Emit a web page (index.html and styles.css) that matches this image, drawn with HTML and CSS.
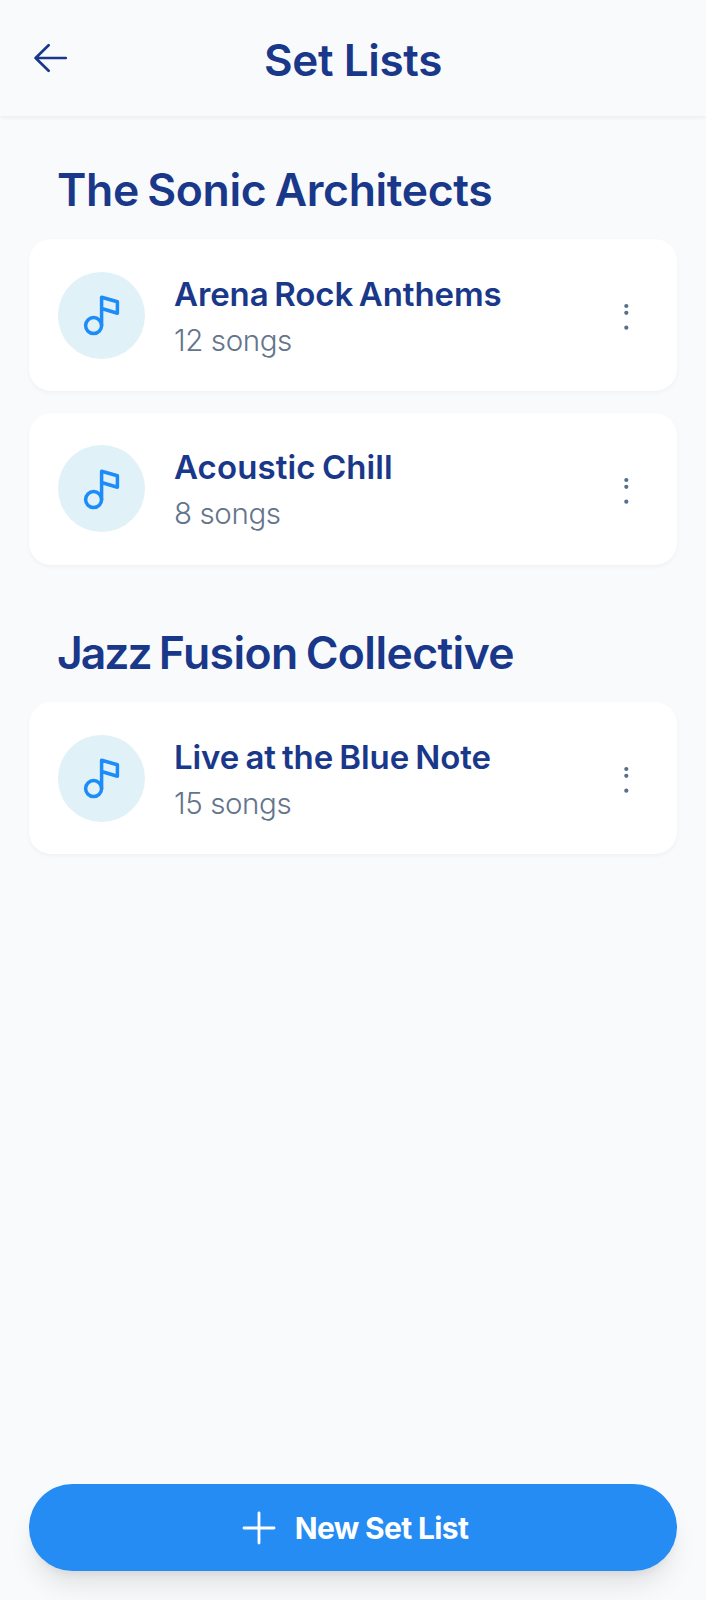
FILE: index.html
```html
<!DOCTYPE html>
<html lang="en">
<head>
<meta charset="utf-8">
<title>Set Lists</title>
<link rel="stylesheet" href="styles.css">
</head>
<body>
<svg class="sprite" aria-hidden="true">
  <symbol id="note" viewBox="0 0 44 44">
    <circle cx="13.6" cy="32.6" r="8"/>
    <path d="M21.6 32.6V4.3L37.4 8.8v11.4L21.6 15.5"/>
  </symbol>
  <symbol id="dots" viewBox="0 0 44 44">
    <circle cx="22.3" cy="13" r="2.1"/><circle cx="22.3" cy="19.8" r="2.1"/><circle cx="22.3" cy="34.7" r="2.1"/>
  </symbol>
</svg>
<div class="app">
  <header class="header">
    <button class="back" aria-label="Back"><svg class="arrow" viewBox="0 0 34 30"><path d="M31.8 15H1.6M14.6 2.3 1.6 15l13 12.7"/></svg></button>
    <h1 class="title">Set Lists</h1>
  </header>
  <main class="content">
    <section class="group">
      <h2 class="band sonic">The Sonic Architects</h2>
      <div class="cards">
        <article class="card">
          <div class="badge"><svg class="note"><use href="#note"/></svg></div>
          <div class="info"><h3 class="name arena">Arena Rock Anthems</h3><p class="count">12 songs</p></div>
          <button class="more" aria-label="More"><svg class="dots"><use href="#dots"/></svg></button>
        </article>
        <article class="card">
          <div class="badge"><svg class="note"><use href="#note"/></svg></div>
          <div class="info"><h3 class="name acoustic">Acoustic Chill</h3><p class="count">8 songs</p></div>
          <button class="more" aria-label="More"><svg class="dots"><use href="#dots"/></svg></button>
        </article>
      </div>
    </section>
    <section class="group">
      <h2 class="band jazz"><span class="tight">Jazz</span> Fusion Collective</h2>
      <div class="cards">
        <article class="card">
          <div class="badge"><svg class="note"><use href="#note"/></svg></div>
          <div class="info"><h3 class="name live">Live at the Blue Note</h3><p class="count">15 songs</p></div>
          <button class="more" aria-label="More"><svg class="dots"><use href="#dots"/></svg></button>
        </article>
      </div>
    </section>
  </main>
  <footer class="footer">
    <button class="create"><svg class="plus" viewBox="0 0 34 34"><path d="M17 2v30M2 17h30"/></svg><span class="label">New Set List</span></button>
  </footer>
</div>
</body>
</html>
```
FILE: styles.css
```css
* { box-sizing: border-box; }
body, h1, h2, h3, p { margin: 0; }
body { background: #f9fafc; font-family: Inter, "Liberation Sans", sans-serif; color: #1a388a; }
button { border: 0; padding: 0; background: none; font: inherit; color: inherit; }
svg { display: block; flex: none; fill: none; stroke: currentColor; stroke-linecap: round; stroke-linejoin: round; }
.sprite { display: none; }
.app { display: flex; flex-direction: column; height: 1600px; }
.header { display: grid; grid-template-columns: 44px 1fr 44px; align-items: center; height: 116px; padding: 3px 29px 0; box-shadow: 0 2px 4px rgba(0, 0, 0, .05); }
.back { padding: 0 0 4px 5px; }
.arrow { width: 34px; height: 30px; stroke-width: 2.7; }
.title { font-size: 44px; line-height: 56px; font-weight: 600; text-align: center; letter-spacing: -.35px; white-space: nowrap; }
.content { flex: 1; padding: 43px 29px 0; }
.group + .group { margin-top: 57.5px; }
.band { padding-left: 28px; height: 64px; margin-bottom: 16px; font-size: 44.5px; line-height: 62px; font-weight: 600; white-space: nowrap; }
.sonic { letter-spacing: -.35px; word-spacing: -2.5px; }
.jazz { letter-spacing: -.6px; word-spacing: -2.5px; }
.tight { letter-spacing: -2px; }
.cards { display: flex; flex-direction: column; gap: 21.6px; }
.card { display: flex; align-items: center; height: 152px; padding: 0 29px; border-radius: 22px; background: #fff; box-shadow: 0 2px 4px rgba(0, 0, 0, .04); }
.badge { display: grid; place-items: center; width: 87px; height: 87px; border-radius: 50%; background: #e0f1f8; color: #1d8cf8; }
.note { width: 44px; height: 44px; stroke-width: 3.5; }
.info { flex: 1; margin-left: 29px; white-space: nowrap; }
.name { font-size: 33px; line-height: 50px; font-weight: 600; }
.arena { letter-spacing: -.1px; word-spacing: -2.5px; }
.acoustic { letter-spacing: .1px; word-spacing: -2px; }
.live { letter-spacing: -.1px; word-spacing: -2px; }
.count { font-size: 29.5px; line-height: 43px; font-weight: 300; color: #64748b; letter-spacing: -.4px; }
.more { color: #56708c; }
.dots { width: 44px; height: 44px; fill: currentColor; stroke: none; }
.footer { padding: 0 29px 29px; }
.create { display: flex; align-items: center; justify-content: center; width: 100%; height: 87px; padding-left: 4px; border-radius: 44px; background: #258cf4; color: #fff; box-shadow: 0 18px 27px -5px rgba(0, 0, 0, .1), 0 7px 11px -7px rgba(0, 0, 0, .1); }
.plus { width: 34px; height: 34px; stroke-width: 2.8; margin-right: 19px; }
.label { font-size: 30px; font-weight: 700; letter-spacing: -.65px; white-space: nowrap; }
```
